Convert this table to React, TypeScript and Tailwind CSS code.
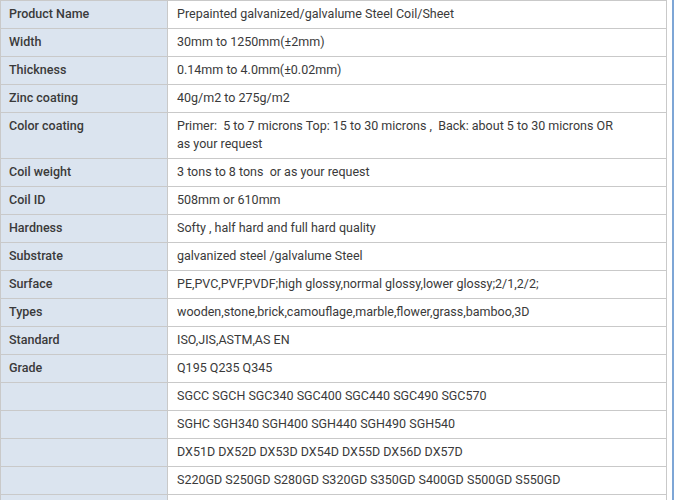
const rows: [string, string[]][] = [
  ["Product Name", ["Prepainted galvanized/galvalume Steel Coil/Sheet"]],
  ["Width", ["30mm to 1250mm(±2mm)"]],
  ["Thickness", ["0.14mm to 4.0mm(±0.02mm)"]],
  ["Zinc coating", ["40g/m2 to 275g/m2"]],
  ["Color coating", ["Primer:  5 to 7 microns Top: 15 to 30 microns ,  Back: about 5 to 30 microns OR", "as your request"]],
  ["Coil weight", ["3 tons to 8 tons  or as your request"]],
  ["Coil ID", ["508mm or 610mm"]],
  ["Hardness", ["Softy , half hard and full hard quality"]],
  ["Substrate", ["galvanized steel /galvalume Steel"]],
  ["Surface", ["PE,PVC,PVF,PVDF;high glossy,normal glossy,lower glossy;2/1,2/2;"]],
  ["Types", ["wooden,stone,brick,camouflage,marble,flower,grass,bamboo,3D"]],
  ["Standard", ["ISO,JIS,ASTM,AS EN"]],
  ["Grade", ["Q195 Q235 Q345"]],
  ["", ["SGCC SGCH SGC340 SGC400 SGC440 SGC490 SGC570"]],
  ["", ["SGHC SGH340 SGH400 SGH440 SGH490 SGH540"]],
  ["", ["DX51D DX52D DX53D DX54D DX55D DX56D DX57D"]],
  ["", ["S220GD S250GD S280GD S320GD S350GD S400GD S500GD S550GD"]],
  ["", [""]],
]

export default function App() {
  return (
    <div className="flex h-[500px] w-[674px] overflow-hidden bg-white" style={{ fontFamily: "Roboto, 'Liberation Sans', sans-serif" }}>
      <table className="w-[667px] shrink-0 border-collapse self-start text-[12.5px] leading-[18px] text-[#3a3a3a]">
        <tbody>
          {rows.map(([label, lines], i) => (
            <tr key={i}>
              <td className="w-[167px] border border-[#c9c9c9] bg-[#dbe4ef] px-[8px] pt-[4px] pb-[5px] align-top font-medium">
                {label || "\u00a0"}
              </td>
              <td className="border border-[#c9c9c9] px-[9px] pt-[4px] pb-[5px] align-top">
                {lines.map((l, j) => (
                  <div key={j} className="whitespace-pre">{l || "\u00a0"}</div>
                ))}
              </td>
            </tr>
          ))}
        </tbody>
      </table>
      <div className="ml-[5px] h-full w-[2px] bg-[#7ea6d6]" />
    </div>
  )
}
